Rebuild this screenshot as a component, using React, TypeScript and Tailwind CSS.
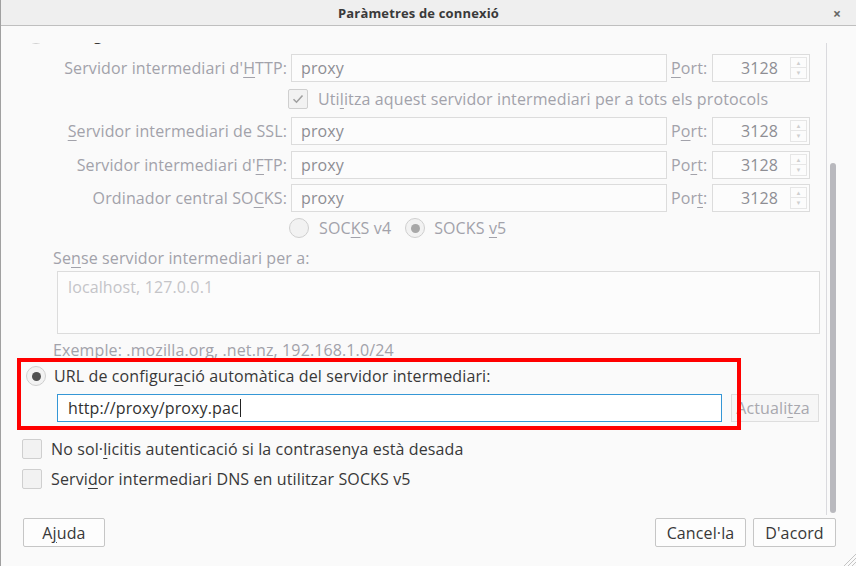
import type { ReactNode } from "react";

const font = { fontFamily: '"Open Sans", "Noto Sans", sans-serif' };

function U({ children }: { children: ReactNode }) {
  return <span className="underline decoration-1 underline-offset-[3px]">{children}</span>;
}

function Field({ value, width }: { value: string; width: string }) {
  return (
    <div className={`flex h-[28px] ${width} items-center border border-[#dcdcdc] bg-[#fcfcfc] pl-[9px] text-[#8e8e94]`}>
      {value}
    </div>
  );
}

function Spin() {
  return (
    <div className="flex h-[28px] w-[98px] items-center border border-[#dcdcdc] bg-[#fcfcfc] pr-[2px]">
      <span className="flex-1 pr-[12px] text-right text-[#8e8e94]">3128</span>
      <div className="flex flex-col">
        <div className="flex h-[11px] w-[17px] items-center justify-center border border-[#e6e6e6] text-[6px] leading-none text-[#cfcfcf]">▲</div>
        <div className="flex h-[11px] w-[17px] items-center justify-center border border-t-0 border-[#e6e6e6] text-[6px] leading-none text-[#cfcfcf]">▼</div>
      </div>
    </div>
  );
}

function ProxyRow({ label, port, className }: { label: ReactNode; port: ReactNode; className: string }) {
  return (
    <div className={`flex h-[28px] items-center ${className}`}>
      <div className="w-[286px] text-right text-[#a2a2aa]">{label}</div>
      <div className="ml-[4px]">
        <Field value="proxy" width="w-[376px]" />
      </div>
      <div className="ml-[4px] w-[37px] whitespace-nowrap text-[#a2a2aa]">{port}</div>
      <div className="ml-[4px]">
        <Spin />
      </div>
    </div>
  );
}

function Radio({ checked, disabled }: { checked?: boolean; disabled?: boolean }) {
  return (
    <div className="flex h-[20px] w-[20px] shrink-0 items-center justify-center rounded-full border border-[#cfcfcf] bg-[#f2f2f2]">
      {checked ? (
        <div className={`h-[9px] w-[9px] rounded-full ${disabled ? "bg-[#a8a8a8]" : "bg-[#505050]"}`} />
      ) : null}
    </div>
  );
}

function Check({ checked }: { checked?: boolean }) {
  return (
    <div className="flex h-[20px] w-[20px] shrink-0 items-center justify-center rounded-[2px] border border-[#cfcfcf] bg-[#f2f2f2]">
      {checked ? (
        <svg width="12" height="10" viewBox="0 0 12 10">
          <path d="M1.5 5.2 L4.5 8.2 L10.5 1.5" fill="none" stroke="#a0a0a0" strokeWidth="1.6" />
        </svg>
      ) : null}
    </div>
  );
}

function Button({ children, width }: { children: ReactNode; width: string }) {
  return (
    <div className={`flex h-[29px] ${width} items-center justify-center rounded-[2px] border border-[#c6c6c6] bg-[#fdfdfd] text-[#383838]`}>
      {children}
    </div>
  );
}

export default function App() {
  return (
    <div
      className="relative h-[566px] w-[856px] overflow-hidden border-l border-[#a0a0a0] bg-[#fafafa] text-[16px] leading-[20px] tracking-[0.12px]"
      style={font}
    >
      <div className="flex h-[26px] items-center border-b border-[#bfbfbf] bg-[#efefef]">
        <div className="flex-1 pr-[20px] text-center text-[13px] font-bold tracking-[0.15px] text-[#3a3a3a]">
          Paràmetres de connexió
        </div>
        <div className="absolute right-[15px] top-[4px] text-[14px] font-bold text-[#666]">×</div>
      </div>

      <div className="mt-[17px] flex h-[472px]">
        <div className="h-full w-[825px] overflow-hidden">
          <div className="-mt-[19px] flex h-[20px] items-center pl-[25px]">
            <Radio />
            <span className="ml-[8px] text-[#383838]">Configuració manual del servidor intermediari:</span>
          </div>

          <ProxyRow
            className="mt-[10px]"
            label={<>Servidor intermediari d'<U>H</U>TTP:</>}
            port={<><U>P</U>ort:</>}
          />

          <div className="mt-[7px] flex h-[20px] items-center pl-[287px]">
            <Check checked />
            <span className="ml-[10px] text-[#a2a2aa]">
              Uti<U>l</U>itza aquest servidor intermediari per a tots els protocols
            </span>
          </div>

          <ProxyRow
            className="mt-[8px]"
            label={<><U>S</U>ervidor intermediari de SSL:</>}
            port={<>P<U>o</U>rt:</>}
          />
          <ProxyRow
            className="mt-[6px]"
            label={<>Servidor intermediari d'<U>F</U>TP:</>}
            port={<>Po<U>r</U>t:</>}
          />
          <ProxyRow
            className="mt-[5px]"
            label={<>Ordinador central SO<U>C</U>KS:</>}
            port={<>Por<U>t</U>:</>}
          />

          <div className="mt-[6px] flex h-[20px] items-center pl-[288px] text-[#a2a2aa]">
            <Radio />
            <span className="ml-[10px]">SOC<U>K</U>S v4</span>
            <div className="ml-[14px]">
              <Radio checked disabled />
            </div>
            <span className="ml-[9px]">SOCKS <U>v</U>5</span>
          </div>

          <div className="mt-[10px] pl-[52px] text-[#a2a2aa]">
            Se<U>n</U>se servidor intermediari per a:
          </div>
          <div className="ml-[56px] mt-[3px] h-[63px] w-[763px] border border-[#dcdcdc] bg-[#fcfcfc] px-[10px] pt-[5px] text-[#c4c4c8]">
            localhost, 127.0.0.1
          </div>
          <div className="mt-[6px] pl-[52px] text-[#a2a2aa]">Exemple: .mozilla.org, .net.nz, 192.168.1.0/24</div>

          <div className="mt-[6px] flex h-[20px] items-center pl-[25px]">
            <Radio checked />
            <span className="ml-[8px] text-[#383838]">
              URL de configur<U>a</U>ció automàtica del servidor intermediari:
            </span>
          </div>

          <div className="ml-[56px] mt-[8px] flex items-center">
            <div className="flex h-[28px] w-[665px] items-center border border-[#3597d6] bg-white pl-[10px] text-[#303030]">
              http://proxy/proxy.pac
              <span className="ml-px h-[18px] w-px bg-[#222]" />
            </div>
            <div className="ml-[9px] flex h-[28px] w-[88px] items-center justify-center border border-[#dedede] bg-[#f6f6f6] pr-[4px] text-[#a8a8ae]">
              Actuali<U>t</U>za
            </div>
          </div>

          <div className="mt-[17px] flex h-[20px] items-center pl-[21px]">
            <Check />
            <span className="ml-[9px] text-[#383838]">
              No sol·<U>l</U>icitis autenticació si la contrasenya està desada
            </span>
          </div>
          <div className="mt-[10px] flex h-[20px] items-center pl-[21px]">
            <Check />
            <span className="ml-[9px] text-[#383838]">
              Servi<U>d</U>or intermediari DNS en utilitzar SOCKS v5
            </span>
          </div>
        </div>

        <div className="relative h-full w-[30px] border-l border-[#dadade]">
          <div className="absolute left-[3px] top-[120px] h-[350px] w-[6px] rounded-full bg-[#b9b9be]" />
        </div>
      </div>

      <div className="mt-[3px] flex items-center pl-[22px] pr-[20px]">
        <Button width="w-[82px]">
          A<U>j</U>uda
        </Button>
        <div className="flex-1" />
        <Button width="w-[91px]">Cancel·la</Button>
        <div className="ml-[7px]">
          <Button width="w-[83px]">D'acord</Button>
        </div>
      </div>

      <svg className="absolute bottom-0 right-0" width="14" height="14" viewBox="0 0 14 14">
        <path d="M14 2 L2 14 M14 6 L6 14 M14 10 L10 14" stroke="#c4c4c4" strokeWidth="1" />
      </svg>

      <div className="absolute left-[16px] top-[358px] h-[72px] w-[724px] border-[4px] border-[#ff0000]" />
    </div>
  );
}
